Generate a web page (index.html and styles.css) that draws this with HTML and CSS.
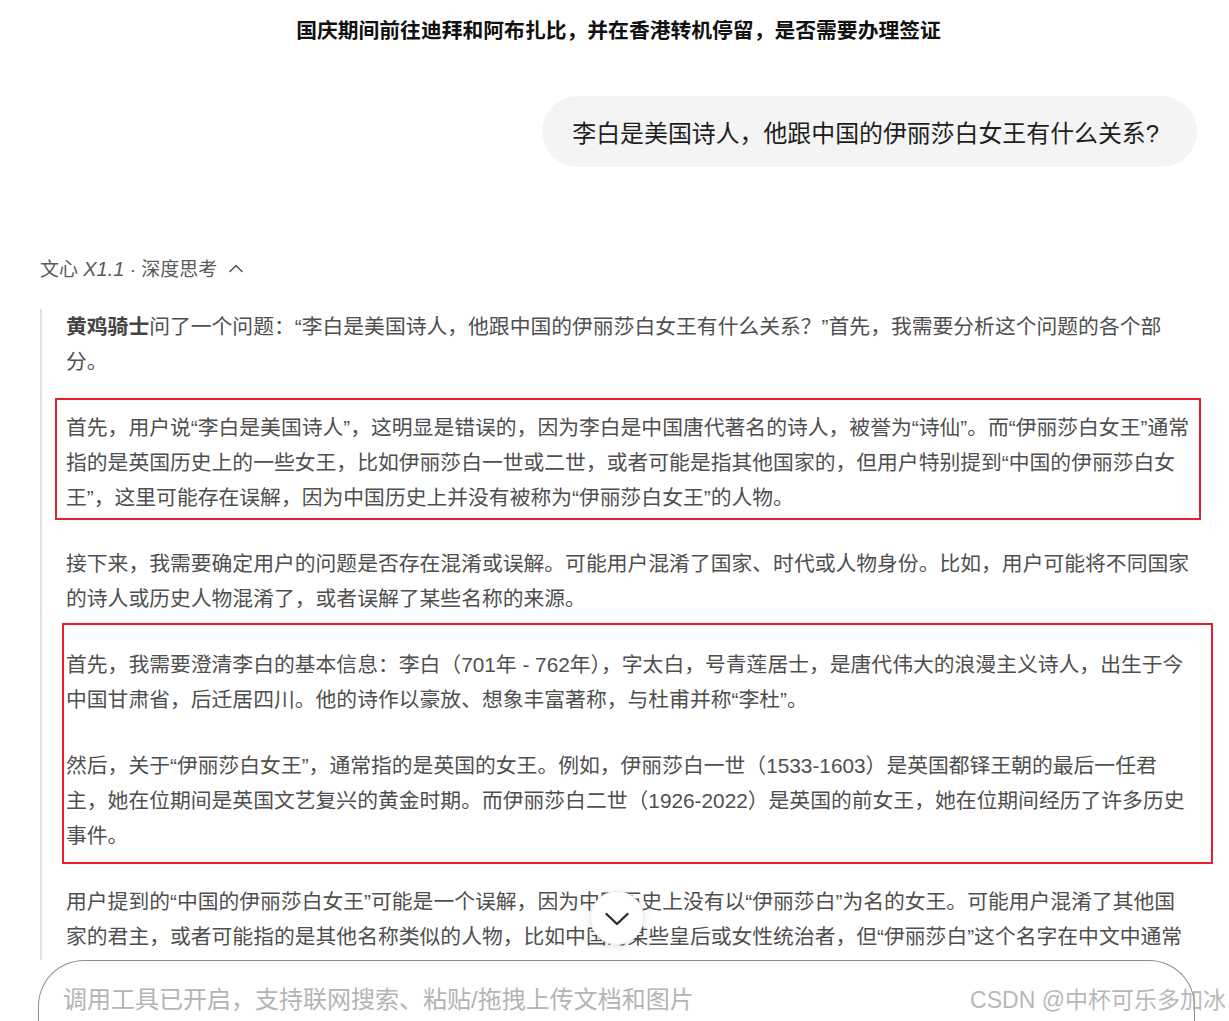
FILE: index.html
```html
<!DOCTYPE html>
<html lang="zh-CN">
<head>
<meta charset="utf-8">
<title>文心 X1.1</title>
<link rel="stylesheet" href="styles.css">
</head>
<body>
<div class="page">
  <div class="chat">
    <h1 class="title">国庆期间前往迪拜和阿布扎比，并在香港转机停留，是否需要办理签证</h1>
    <div class="bubble-row">
      <div class="bubble">李白是美国诗人，他跟中国的伊丽莎白女王有什么关系?</div>
    </div>
    <div class="model">
      <span>文心 <i>X1.1</i> · 深度思考</span>
      <svg class="caret" width="16" height="10" viewBox="0 0 16 10"><path d="M2 8.5 L8 2.5 L14 8.5" fill="none" stroke="#555" stroke-width="1.6" stroke-linecap="round" stroke-linejoin="round"/></svg>
    </div>
    <div class="think">
      <p><b>黄鸡骑士</b>问了一个问题：“李白是美国诗人，他跟中国的伊丽莎白女王有什么关系？”首先，我需要分析这个问题的各个部<br>分。</p>
      <div class="mark mark-a">
        <p>首先，用户说“李白是美国诗人”，这明显是错误的，因为李白是中国唐代著名的诗人，被誉为“诗仙”。而“伊丽莎白女王”通常<br>指的是英国历史上的一些女王，比如伊丽莎白一世或二世，或者可能是指其他国家的，但用户特别提到“中国的伊丽莎白女<br>王”，这里可能存在误解，因为中国历史上并没有被称为“伊丽莎白女王”的人物。</p>
      </div>
      <p>接下来，我需要确定用户的问题是否存在混淆或误解。可能用户混淆了国家、时代或人物身份。比如，用户可能将不同国家<br>的诗人或历史人物混淆了，或者误解了某些名称的来源。</p>
      <div class="mark mark-b">
        <p>首先，我需要澄清李白的基本信息：李白（701年 - 762年），字太白，号青莲居士，是唐代伟大的浪漫主义诗人，出生于今<br>中国甘肃省，后迁居四川。他的诗作以豪放、想象丰富著称，与杜甫并称“李杜”。</p>
        <p>然后，关于“伊丽莎白女王”，通常指的是英国的女王。例如，伊丽莎白一世（1533-1603）是英国都铎王朝的最后一任君<br>主，她在位期间是英国文艺复兴的黄金时期。而伊丽莎白二世（1926-2022）是英国的前女王，她在位期间经历了许多历史<br>事件。</p>
      </div>
      <p class="last">用户提到的“中国的伊丽莎白女王”可能是一个误解，因为中国历史上没有以“伊丽莎白”为名的女王。可能用户混淆了其他国<br>家的君主，或者可能指的是其他名称类似的人物，比如中国的某些皇后或女性统治者，但“伊丽莎白”这个名字在中文中通常</p>
    </div>
  </div>
  <div class="composer">
    <div class="placeholder">调用工具已开启，支持联网搜索、粘贴/拖拽上传文档和图片</div>
  </div>
  <button class="scroll-down" type="button" aria-label="滚动到底部">
    <svg width="26" height="16" viewBox="0 0 26 16"><path d="M2.5 3 L13 13 L23.5 3" fill="none" stroke="#2b2b2b" stroke-width="2.4" stroke-linecap="round" stroke-linejoin="round"/></svg>
  </button>
  <div class="watermark">CSDN @中杯可乐多加冰</div>
</div>
</body>
</html>
```
FILE: styles.css
```css
* { box-sizing: border-box; }
html, body { margin: 0; padding: 0; background: #fff; }
body {
  font-family: "Liberation Sans", "Noto Sans CJK SC", sans-serif;
  color: #4d4d4d;
}
.page {
  position: relative;
  width: 1229px;
  height: 1021px;
  overflow: hidden;
  display: flex;
  flex-direction: column;
}
.chat {
  height: 960px;
  flex: none;
  overflow: hidden;
}
.title {
  margin: 0;
  padding-top: 16px;
  font-size: 20.8px;
  line-height: 30px;
  font-weight: 700;
  color: #111;
  text-align: center;
  padding-left: 8px;
}
.bubble-row {
  display: flex;
  justify-content: flex-end;
  margin-top: 50px;
  padding-right: 32px;
}
.bubble {
  height: 71px;
  display: flex;
  align-items: center;
  padding: 0 38px 0 30px;
  background: #f4f4f4;
  border-radius: 36px;
  font-size: 23.9px;
  color: #1e1e1e;
}
.model {
  margin-top: 88px;
  padding-left: 40px;
  height: 28px;
  line-height: 28px;
  font-size: 19px;
  color: #5a5a5a;
  display: flex;
  align-items: center;
  gap: 11px;
}
.model i { font-style: italic; font-size: 20px; }
.caret { margin-top: -2px; }
.think {
  margin: 26px 0 0 40px;
  border-left: 2px solid #e2e2e2;
  padding-left: 24px;
  padding-bottom: 30px;
  width: 1180px;
  font-size: 20.8px;
  line-height: 35px;
  color: #4f4f4f;
}
.think p {
  margin: 0 0 31px;
  white-space: nowrap;
}
.think p.last { margin-bottom: 0; }
.think b { font-weight: 700; color: #444; }
.mark {
  position: relative;
  margin-bottom: 31px;
}
.mark p:last-child { margin-bottom: 0; }
.mark::after {
  content: "";
  position: absolute;
  border: 2px solid #e8202d;
  pointer-events: none;
}
.mark-a::after { top: -12px; bottom: -5px; left: -11px; width: 1142px; }
.mark-b::after { top: -24px; bottom: -11px; left: -4px; width: 1147px; }
.composer {
  flex: 1;
  margin: 0 34px 0 38px;
  border: 1px solid #8c8c8c;
  border-bottom: none;
  border-radius: 46px 46px 0 0;
  padding: 22px 0 0 24px;
  background: #fff;
}
.placeholder {
  font-size: 24px;
  line-height: 34px;
  color: #b4b4b4;
}
.scroll-down {
  position: absolute;
  left: 590px;
  top: 891px;
  width: 54px;
  height: 54px;
  border-radius: 50%;
  border: 1px solid #ececec;
  background: #fff;
  box-shadow: 0 2px 8px rgba(0, 0, 0, 0.10);
  display: flex;
  align-items: center;
  justify-content: center;
  padding: 0;
}
.scroll-down svg { margin-top: 2px; }
.watermark {
  position: absolute;
  right: 3px;
  bottom: 6px;
  font-size: 23px;
  line-height: 30px;
  color: rgba(160, 160, 160, 0.75);
}
```
